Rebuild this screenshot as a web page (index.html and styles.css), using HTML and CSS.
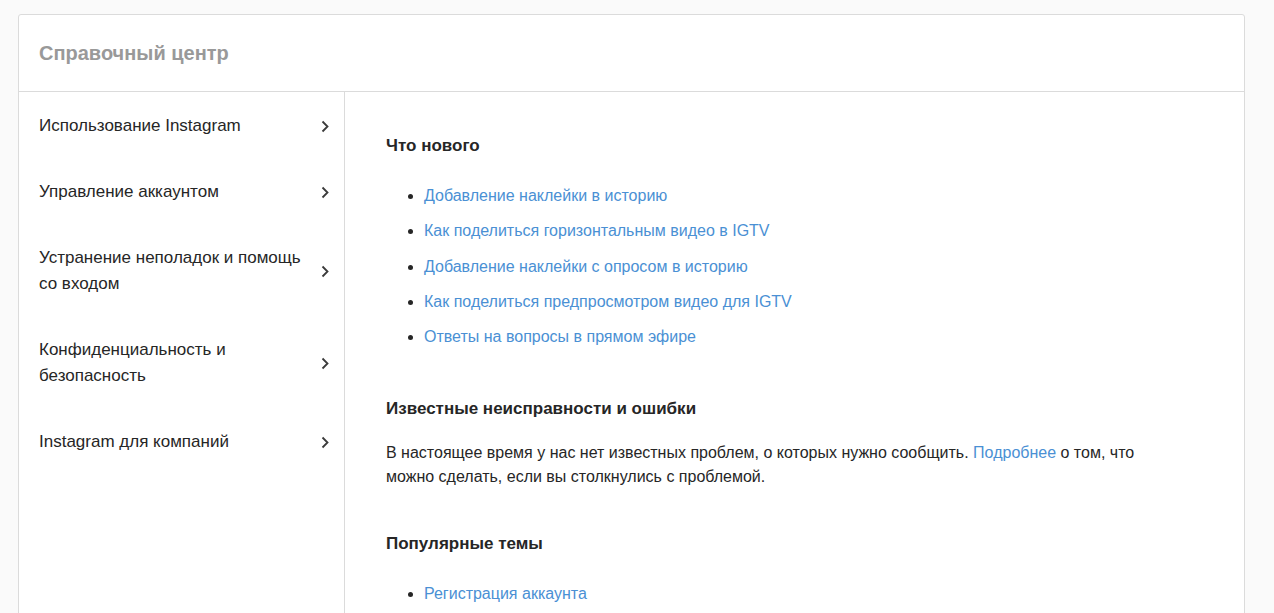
FILE: index.html
```html
<!DOCTYPE html>
<html lang="ru">
<head>
<meta charset="utf-8">
<title>Справочный центр</title>
<link rel="stylesheet" href="styles.css">
</head>
<body>
<div class="panel">
  <header class="panel-head">
    <h1 class="title">Справочный центр</h1>
  </header>
  <div class="panel-body">
    <nav class="sidebar">
      <a class="nav-item" href="#"><span class="nav-text">Использование Instagram</span><svg class="chev" viewBox="0 0 8 13" width="8" height="13"><path d="M1.5 1.5 L6.5 6.5 L1.5 11.5" fill="none" stroke="#3a3a3a" stroke-width="1.8"/></svg></a>
      <a class="nav-item" href="#"><span class="nav-text">Управление аккаунтом</span><svg class="chev" viewBox="0 0 8 13" width="8" height="13"><path d="M1.5 1.5 L6.5 6.5 L1.5 11.5" fill="none" stroke="#3a3a3a" stroke-width="1.8"/></svg></a>
      <a class="nav-item" href="#"><span class="nav-text">Устранение неполадок и помощь со входом</span><svg class="chev" viewBox="0 0 8 13" width="8" height="13"><path d="M1.5 1.5 L6.5 6.5 L1.5 11.5" fill="none" stroke="#3a3a3a" stroke-width="1.8"/></svg></a>
      <a class="nav-item" href="#"><span class="nav-text">Конфиденциальность и безопасность</span><svg class="chev" viewBox="0 0 8 13" width="8" height="13"><path d="M1.5 1.5 L6.5 6.5 L1.5 11.5" fill="none" stroke="#3a3a3a" stroke-width="1.8"/></svg></a>
      <a class="nav-item" href="#"><span class="nav-text">Instagram для компаний</span><svg class="chev" viewBox="0 0 8 13" width="8" height="13"><path d="M1.5 1.5 L6.5 6.5 L1.5 11.5" fill="none" stroke="#3a3a3a" stroke-width="1.8"/></svg></a>
    </nav>
    <main class="content">
      <section class="block">
        <h2 class="block-title">Что нового</h2>
        <ul class="links">
          <li><a href="#">Добавление наклейки в историю</a></li>
          <li><a href="#">Как поделиться горизонтальным видео в IGTV</a></li>
          <li><a href="#">Добавление наклейки с опросом в историю</a></li>
          <li><a href="#">Как поделиться предпросмотром видео для IGTV</a></li>
          <li><a href="#">Ответы на вопросы в прямом эфире</a></li>
        </ul>
      </section>
      <section class="block">
        <h2 class="block-title">Известные неисправности и ошибки</h2>
        <p class="text">В настоящее время у нас нет известных проблем, о которых нужно сообщить. <a href="#">Подробнее</a> о том, что можно сделать, если вы столкнулись с проблемой.</p>
      </section>
      <section class="block">
        <h2 class="block-title">Популярные темы</h2>
        <ul class="links">
          <li><a href="#">Регистрация аккаунта</a></li>
          <li><a href="#">Удаление аккаунта</a></li>
        </ul>
      </section>
    </main>
  </div>
</div>
</body>
</html>
```

FILE: styles.css
```css
html, body {
  margin: 0;
  padding: 0;
  background: #fafafa;
}
body {
  font-family: "Liberation Sans", Arial, sans-serif;
  color: #262626;
  padding: 14px 29px 0 18px;
}
.panel {
  background: #fff;
  border: 1px solid #dbdbdb;
  border-radius: 3px;
}
.panel-head {
  height: 76px;
  border-bottom: 1px solid #dbdbdb;
  display: flex;
  align-items: center;
  padding-left: 20px;
}
.title {
  margin: 0;
  font-size: 20px;
  font-weight: bold;
  color: #999;
}
.panel-body {
  display: flex;
  align-items: stretch;
  min-height: 600px;
}
.sidebar {
  width: 325px;
  flex: none;
  border-right: 1px solid #dbdbdb;
  display: flex;
  flex-direction: column;
  padding-top: 1px;
}
.nav-item {
  display: flex;
  align-items: center;
  justify-content: space-between;
  padding: 20px 15px 20px 20px;
  color: #262626;
  text-decoration: none;
  font-size: 17px;
  line-height: 26px;
}
.nav-text {
  max-width: 275px;
}
.chev {
  flex: none;
}
.content {
  flex: 1;
  padding: 42px 60px 0 41px;
}
.block {
  margin-bottom: 43px;
}
.block-title {
  margin: 0;
  font-size: 17px;
  line-height: 24px;
  font-weight: bold;
  color: #262626;
}
.links {
  margin: 20px 0 0;
  padding-left: 38px;
}
.links li {
  line-height: 35.25px;
  font-size: 16px;
}
.links a, .text a {
  color: #4a90d4;
  text-decoration: none;
}
.text {
  margin: 20px 0 0;
  font-size: 16px;
  line-height: 24px;
}
```
